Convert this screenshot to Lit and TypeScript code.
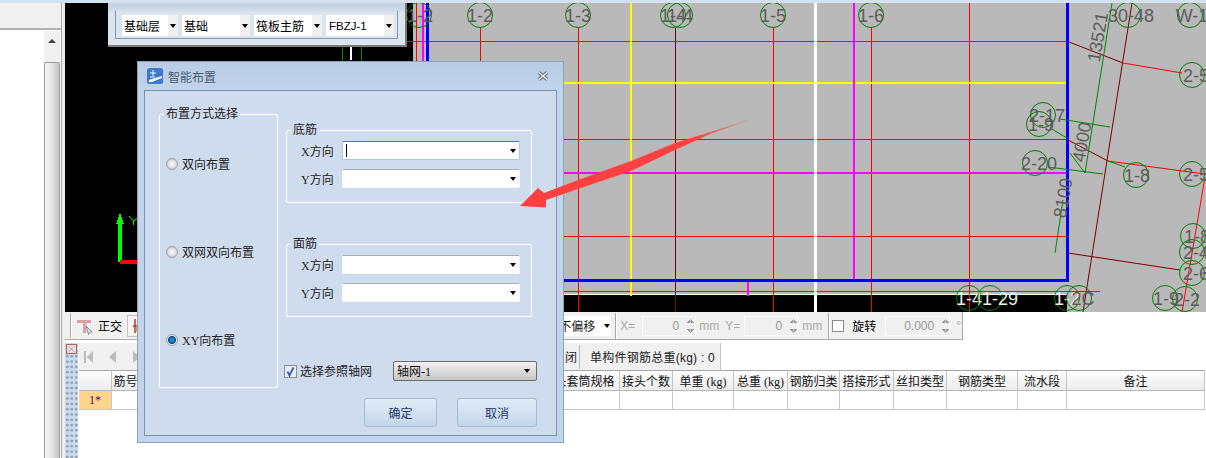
import { css, html, LitElement, svg } from 'lit';
import { customElement } from 'lit/decorators.js';

type Bubble = [number, number, string, number, boolean?];

// axis bubbles: circle x, circle y, label, label shift from the circle, label on black
const BUBBLES: Bubble[] = [
    [419, 15, '1-2', 1], [480, 15, '1-2', 0], [578, 15, '1-3', 0], [673, 15, '1-4', 0], [680, 15, '1-4', 0],
    [773, 15, '1-5', 0], [871, 15, '1-6', 0], [1128, 15, '30-48', 3], [1190, 15, 'W-1', 2],
    [1192, 75, '2-5', 4], [1043, 115, '2-17', 4], [1039, 124, '1-9', 2], [1035, 163, '2-20', 4],
    [1136, 175, '1-8', 1], [1192, 174, '2-5', 4], [1193, 236, '1-8', 4], [1192, 252, '2-4', 4],
    [1192, 273, '2-6', 4], [1165, 298, '1-9', 1], [1185, 299, '2-2', 2], [969, 298, '1-4', 0, true],
    [990, 298, '1-29', 10, true], [1067, 298, '1-2', 0, true], [1079, 298, '2C', 4],
];

const COLUMNS = ['', '筋号', '', '接头套筒规格', '接头个数', '单重 (kg)', '总重 (kg)', '钢筋归类', '搭接形式', '丝扣类型', '钢筋类型', '流水段', '备注'];

@customElement('app-root')
export class AppRoot extends LitElement
{
    private renderCanvas()
    {
        return html`
<svg class="cad" viewBox="65 3 1141 309" width="1141" height="309">
    <rect x="65" y="3" width="1141" height="309" fill="#000"></rect>
    <rect x="413" y="3" width="793" height="291" fill="#b9b9b9"></rect>
    <rect x="1067" y="294" width="139" height="18" fill="#b9b9b9"></rect>
    <g shape-rendering="crispEdges">
        <path d="M413 294.5H1067" stroke="#fff"></path>
        <path d="M407 41.5H1067M413 139.5H1067M413 236.5H1067M413 291.5H1100" stroke="#f00"></path>
        <path d="M416.5 3V312M480.5 28V312M578.5 28V312M773.5 28V312M871.5 28V312M969.5 3V312" stroke="#f00"></path>
        <path d="M675.5 28V312" stroke="#6e0000"></path>
        <path d="M631 3V296" stroke="#ff0" stroke-width="2"></path>
        <path d="M413 83H1067" stroke="#ff0" stroke-width="2"></path>
        <path d="M423 3V294M854 3V280M748 281V296" stroke="#f0f" stroke-width="2"></path>
        <path d="M413 173H1067" stroke="#f0f" stroke-width="2"></path>
        <path d="M815.5 3V312" stroke="#fff" stroke-width="3"></path>
        <path d="M427.5 3V282M1067.5 3V282M426 280.5H1069" stroke="#00f" stroke-width="3"></path>
        <path d="M342 46V62M361 46V62" stroke="#080"></path>
        <path d="M350.5 47V60" stroke="#fff" stroke-width="2"></path>
        <path d="M120 262V224" stroke="#0f0" stroke-width="4"></path>
        <path d="M120 213L124 224H116Z" fill="#0f0"></path>
        <path d="M120 262H138" stroke="#f00" stroke-width="4"></path>
    </g>
    <path d="M129 216L133.500 221L138 218M133.500 221V225" fill="none" stroke="#0f0"></path>
    <path d="M1069 42L1123 63M1132 3L1083 312M1068 140L1108 161M1068 253L1180 270" fill="none" stroke="#7a0000"></path>
    <path d="M1123 63L1182 73M1108 161L1205 174M1205 177L1182 312" fill="none" stroke="#f00"></path>
    <path d="M1112 3L1085 173M1060 119L1110 127M1048 167L1103 174M1063 200L1055 253M1050 128L1067 138M1108 161L1125 167M1070 153L1085 173" fill="none" stroke="#080"></path>
    ${BUBBLES.map(([x, y, label, shift, onBlack]) => svg`
        <circle cx=${x} cy=${y} r="12.500" class="ring"></circle>
        <text x=${x + shift} y=${y + 6.500} class=${onBlack ? 'tag light' : 'tag'}>${label}</text>`)}
    <text class="tag" transform="translate(1098 37) rotate(-80)" y="6">13521</text>
    <text class="tag" transform="translate(1082 142) rotate(-80)" y="6">4000</text>
    <text class="tag" transform="translate(1063 198) rotate(-80)" y="6">8100</text>
</svg>`;
    }

    private renderToolRow()
    {
        return html`
<div class="tool-row">
    <span class="grip"></span>
    <svg class="ortho" viewBox="0 0 18 18" width="18" height="18">
        <path d="M1 3H15V6H10V16H7V6H1Z" fill="#dca2a2"></path>
        <path d="M10 9L16 15L13.500 15.500L12.500 17.500Z" fill="#dfe6ee" stroke="#66788c" stroke-width=".8"></path>
    </svg>
    <span class="tool-label">正交</span>
    <span class="tool-btn">
        <svg viewBox="0 0 12 20" width="12" height="20">
            <path d="M2 10H10M4 3V17" stroke="#a03c3c" stroke-width="1.500"></path>
            <circle cx="8" cy="13" r="3.500" fill="#c9a24a"></circle>
        </svg>
    </span>
    <span class="fill"></span>
    <span class="offset"><span>不偏移</span><span class="offset-arrow"><i class="caret"></i></span></span>
    <span class="sep"></span>
    <span class="dim x-eq">X=</span>
    <span class="num w-54">0<i class="spin"></i></span>
    <span class="dim mm">mm</span>
    <span class="dim y-eq">Y=</span>
    <span class="num w-55">0<i class="spin"></i></span>
    <span class="dim mm">mm</span>
    <span class="sep sep-b"></span>
    <span class="box"></span>
    <span class="tool-label rotate">旋转</span>
    <span class="num w-66">0.000<i class="spin"></i></span>
    <span class="dim deg">°</span>
</div>`;
    }

    private renderSheet()
    {
        return html`
<div class="sheet">
    <div class="dock">
        <svg viewBox="0 0 12 10" width="12" height="10">
            <rect x=".5" y=".5" width="10" height="9" fill="#f0d8d8" stroke="#b06060"></rect>
            <path d="M2.500 2L8.500 8M8.500 2L2.500 8" stroke="#fff" stroke-width="2"></path>
            <path d="M2.500 2L8.500 8M8.500 2L2.500 8" stroke="#666" stroke-width=".7"></path>
        </svg>
    </div>
    <div class="sheet-main">
        <div class="nav-row">
            <svg class="nav" viewBox="0 0 60 14" width="60" height="14">
                <path d="M1 1H3V13H1ZM10 1V13L4 7Z" fill="#bcbcbc"></path>
                <path d="M33 1V13L26 7Z" fill="#bcbcbc"></path>
                <path d="M50 1V13L57 7Z" fill="#bcbcbc"></path>
            </svg>
            <span class="fill"></span>
            <span class="nav-cut">闭</span>
            <span class="nav-sep"></span>
            <span class="total">单构件钢筋总重(kg) : 0</span>
        </div>
        <div class="table">
            ${COLUMNS.map((c) => html`<div class="th">${c}</div>`)}
            ${COLUMNS.map((_, i) => html`<div class=${i === 0 ? 'td row-no' : 'td'}>${i === 0 ? '1*' : ''}</div>`)}
        </div>
    </div>
</div>`;
    }

    private renderDialog()
    {
        const direction = (label: string, focused = false) => html`
<div class="field">
    <span class="field-label">${label}</span>
    <span class=${focused ? 'combo focus' : 'combo'}>${focused ? html`<i class="cursor"></i>` : ''}<i class="caret"></i></span>
</div>`;
        const radio = (label: string, on = false) => html`
<div class="radio-row"><i class=${on ? 'radio on' : 'radio'}></i>${label}</div>`;

        return html`
<div class="dialog">
    <div class="title">
        <svg viewBox="0 0 16 16" width="16" height="16">
            <rect width="16" height="16" rx="2.500" fill="#3f78d0"></rect>
            <path d="M2 12L15 8V10L5 14H2Z" fill="#fff"></path>
            <path d="M6 2V8M3 5H9M3 9H8" stroke="#fff" fill="none"></path>
        </svg>
        <span>智能布置</span>
        <svg class="close" viewBox="0 0 12 10" width="12" height="10">
            <path d="M2 1.500L10 8.500M10 1.500L2 8.500" stroke="#4a5a6a" stroke-width="3.200"></path>
            <path d="M2 1.500L10 8.500M10 1.500L2 8.500" stroke="#fff" stroke-width="1.400"></path>
        </svg>
    </div>
    <div class="panel">
        <div class="columns">
            <fieldset class="modes">
                <legend>布置方式选择</legend>
                ${radio('双向布置')}
                ${radio('双网双向布置')}
                ${radio('XY向布置', true)}
            </fieldset>
            <div class="right">
                <fieldset class="rebar">
                    <legend>底筋</legend>
                    ${direction('X方向', true)}
                    ${direction('Y方向')}
                </fieldset>
                <fieldset class="rebar second">
                    <legend>面筋</legend>
                    ${direction('X方向')}
                    ${direction('Y方向')}
                </fieldset>
                <div class="ref-row">
                    <svg class="check" viewBox="0 0 13 13" width="13" height="13">
                        <rect x=".5" y=".5" width="12" height="12" fill="#e6ecf4" stroke="#8a8f98"></rect>
                        <path d="M3.500 6.500L5.500 10.500L9.500 2.500" fill="none" stroke="#3a5fb8" stroke-width="1.800"></path>
                    </svg>
                    <span>选择参照轴网</span>
                    <span class="grid-select">轴网-1<i class="caret"></i></span>
                </div>
            </div>
        </div>
        <div class="actions">
            <span class="btn ok">确定</span>
            <span class="btn cancel">取消</span>
        </div>
    </div>
</div>`;
    }

    protected render(): unknown
    {
        return html`
<div class="strip"></div>
<aside class="side">
    <div class="side-head"></div>
    <div class="side-body">
        <div class="scroll">
            <div class="scroll-up"><i class="up"></i></div>
            <div class="scroll-thumb"></div>
        </div>
    </div>
</aside>
<main class="main">
    ${this.renderCanvas()}
    ${this.renderToolRow()}
    ${this.renderSheet()}
</main>
<div class="float-bar">
    <div class="float-inner">
        <span class="pick w-56">基础层<i class="pick-arrow"><i class="caret"></i></i></span>
        <span class="pick w-68">基础<i class="pick-arrow"><i class="caret"></i></i></span>
        <span class="pick w-68">筏板主筋<i class="pick-arrow"><i class="caret"></i></i></span>
        <span class="pick w-68 latin">FBZJ-1<i class="pick-arrow"><i class="caret"></i></i></span>
    </div>
</div>
${this.renderDialog()}
<svg class="arrow" viewBox="0 0 250 100" width="250" height="100">
    <defs>
        <linearGradient id="fade" x1="1" y1="0" x2="0" y2="1">
            <stop offset="0" stop-color="#ff4040" stop-opacity=".1"></stop>
            <stop offset=".25" stop-color="#ff4040"></stop>
        </linearGradient>
    </defs>
    <path d="M240 3L157 29L113 47L60 66L26 79L20 74L2 92L28 93.500L28 86L60 75L113 57L157 36L192 20Z" fill="url(#fade)"></path>
</svg>`;
    }

    static get styles()
    {
        return css`
:host {
    display: grid;
    grid-template-columns: 65px 1fr;
    grid-template-rows: 3px 455px;
    position: relative;
    width: 1206px;
    height: 458px;
    overflow: hidden;
    background: #fff;
    font: 12px "Liberation Serif", "Noto Sans CJK SC", serif;
    color: #111;
}

i {
    display: block;
    font-style: normal;
}

.strip {
    grid-column: 1 / 3;
    background: #d5e1ee;
}

.side {
    display: flex;
    flex-direction: column;
    border-right: 3px solid #eee;
    box-sizing: border-box;
}

.side-head {
    height: 25px;
    background: #f0f0f0;
    border-right: 1px solid #a8a8a8;
    border-bottom: 2px solid #b0b0b0;
}

.side-body {
    flex: 1;
    display: flex;
    justify-content: flex-end;
    border-right: 1px solid #a8a8a8;
    padding-top: 1px;
}

.scroll {
    width: 16px;
    margin-right: 1px;
    display: flex;
    flex-direction: column;
}

.scroll-up {
    height: 31px;
    background: #f0f0f0;
    display: flex;
    justify-content: center;
    padding-top: 8px;
    box-sizing: border-box;
}

.up {
    width: 0;
    height: 0;
    border: 4px solid transparent;
    border-top: 0;
    border-bottom: 4px solid #444;
}

.scroll-thumb {
    flex: 1;
    border: 1px solid #9a9a9a;
    border-bottom: 0;
    border-radius: 2px 2px 0 0;
    background: linear-gradient(90deg, #f6f6f6, #e6e6e6 45%, #c4c4c4);
}

.main {
    display: flex;
    flex-direction: column;
    min-width: 0;
}

.cad {
    display: block;
    flex: none;
}

.ring {
    fill: none;
    stroke: #008000;
}

.tag {
    font: 18px "Liberation Sans", sans-serif;
    fill: #5c5c5c;
    text-anchor: middle;
}

.tag.light {
    fill: #eee;
}

.fill {
    flex: 1;
}

.tool-row {
    width: 898px;
    height: 28px;
    flex: none;
    box-sizing: border-box;
    display: flex;
    align-items: center;
    background: #f0f0f0;
    border-right: 1px solid #a8a8a8;
    border-bottom: 1px solid #a8a8a8;
    font-family: "Liberation Sans", "Noto Sans CJK SC", sans-serif;
}

.grip {
    width: 1px;
    height: 25px;
    margin-left: 5px;
    background: #a8a8a8;
    border-right: 1px solid #fff;
}

.ortho {
    margin-left: 4px;
}

.tool-label {
    margin-left: 4px;
    color: #000;
}

.tool-btn {
    margin-left: 5px;
    width: 20px;
    height: 22px;
    box-sizing: border-box;
    display: flex;
    align-items: center;
    padding-left: 3px;
    background: #f8f4f2;
    border: 1px solid #c4c4c4;
}

.offset {
    width: 52px;
    height: 20px;
    display: flex;
    align-items: center;
    background: #fff;
    justify-content: space-between;
    color: #222;
}

.offset-arrow {
    width: 8px;
    display: flex;
    justify-content: center;
}

.sep {
    width: 1px;
    height: 26px;
    margin-left: 4px;
    background: #a8a8a8;
    border-right: 1px solid #fff;
}

.sep-b {
    margin-left: 6px;
}

.dim {
    color: #a9a9a9;
}

.x-eq {
    margin-left: 3px;
    width: 22px;
}

.y-eq {
    margin-left: 6px;
    width: 19px;
}

.mm {
    margin-left: 3px;
}

.deg {
    margin-left: 5px;
    margin-right: 1px;
}

.num {
    height: 20px;
    box-sizing: border-box;
    display: flex;
    align-items: center;
    justify-content: flex-end;
    gap: 8px;
    padding-right: 1px;
    border: 1px solid #fafafa;
    color: #9a9a9a;
}

.w-54 {
    width: 54px;
}

.w-55 {
    width: 55px;
}

.w-66 {
    width: 66px;
}

.spin {
    width: 7px;
    height: 14px;
    background:
        linear-gradient(135deg, transparent 50%, #999 50%) 0 0 / 3.500px 4px no-repeat,
        linear-gradient(225deg, transparent 50%, #999 50%) 3.500px 0 / 3.500px 4px no-repeat,
        linear-gradient(45deg, transparent 50%, #999 50%) 0 10px / 3.500px 4px no-repeat,
        linear-gradient(315deg, transparent 50%, #999 50%) 3.500px 10px / 3.500px 4px no-repeat;
}

.box {
    width: 12px;
    height: 12px;
    margin-left: 2px;
    background: #fff;
    border: 1px solid #8a8a8a;
    box-sizing: border-box;
}

.rotate {
    margin-left: 8px;
    margin-right: 9px;
}

.sheet {
    flex: 1;
    display: flex;
    margin-top: 3px;
    min-height: 0;
}

.dock {
    width: 13px;
    flex: none;
    padding-top: 1px;
    box-sizing: border-box;
    background-color: #c9d9ee;
    background-image: radial-gradient(#8f9cad 1px, transparent 1.200px);
    background-size: 4.500px 5.300px;
}

.dock svg {
    display: block;
    margin-left: 1px;
}

.sheet-main {
    flex: 1;
    min-width: 0;
    margin-left: 1px;
}

.nav-row {
    width: 642px;
    height: 27px;
    box-sizing: border-box;
    display: flex;
    align-items: center;
    background: #f0f0f0;
    border-right: 1px solid #c4c4c4;
    font-family: "Liberation Sans", "Noto Sans CJK SC", sans-serif;
}

.nav {
    margin-left: 4px;
}

.nav-cut {
    width: 14px;
    color: #222;
}

.nav-sep {
    width: 1px;
    height: 24px;
    background: #bdbdbd;
    margin-right: 10px;
}

.total {
    margin-right: 5px;
    color: #1a1a1a;
    letter-spacing: .25px;
}

.table {
    width: 1126px;
    display: grid;
    grid-template-columns: 33px 28px 398px 82px 53px 61px 54px 52px 54px 53px 71px 49px 138px;
    grid-template-rows: 20px 19px;
    border-top: 1px solid #a8a8a8;
    border-right: 1px solid #c4c4c4;
    box-sizing: border-box;
}

.th {
    box-sizing: border-box;
    display: flex;
    align-items: center;
    justify-content: center;
    white-space: nowrap;
    background: linear-gradient(#fdfdfd, #ececec);
    border-right: 1px solid #c4c4c4;
    border-bottom: 1px solid #b8b8b8;
    color: #111;
}

.td {
    box-sizing: border-box;
    display: flex;
    align-items: center;
    justify-content: center;
    border-right: 1px solid #c8c8c8;
    border-bottom: 1px solid #c4c4c4;
}

.row-no {
    background: #ffd58c;
    color: #4a0a6a;
}

.float-bar {
    position: absolute;
    left: 108px;
    top: 3px;
    width: 299px;
    height: 44px;
    box-sizing: border-box;
    padding: 7px 7px 6px 7px;
    background: linear-gradient(#c6d3e2 0, #c6d3e2 4px, #dbe5f0 10px);
    border-right: 2px solid #7a7a7a;
    border-bottom: 2px solid #7a7a7a;
    font-family: "Liberation Sans", "Noto Sans CJK SC", sans-serif;
}

.float-inner {
    display: flex;
    gap: 4px;
    height: 29px;
    box-sizing: border-box;
    padding: 4px 0 0 6px;
    border: 1px solid #7f9ab8;
    border-top-color: transparent;
}

.pick {
    height: 21px;
    box-sizing: border-box;
    display: flex;
    align-items: center;
    justify-content: space-between;
    padding-left: 2px;
    background: #fff;
    color: #000;
}

.pick.latin {
    padding-left: 3px;
    font-size: 11.500px;
}

.w-56 {
    width: 56px;
}

.w-68 {
    width: 68px;
}

.pick-arrow {
    width: 10px;
    height: 21px;
    display: flex;
    align-items: center;
    justify-content: center;
    background: #f0f0f0;
}

.caret {
    width: 0;
    height: 0;
    border: 3.500px solid transparent;
    border-bottom: 0;
    border-top: 4px solid #000;
}

.dialog {
    position: absolute;
    left: 137px;
    top: 61px;
    width: 427px;
    height: 382px;
    box-sizing: border-box;
    display: flex;
    flex-direction: column;
    padding: 0 6px 6px;
    background: linear-gradient(#b8cce6, #c3d4ea 30px);
    border: 1px solid #8ea3bb;
}

.title {
    height: 28px;
    flex: none;
    display: flex;
    align-items: center;
    gap: 5px;
    padding-left: 3px;
    color: #4a5a70;
    font-family: "Noto Sans CJK SC", sans-serif;
}

.close {
    margin-left: auto;
    margin-right: 8px;
}

.panel {
    flex: 1;
    box-sizing: border-box;
    padding: 16px 19px 0 14px;
    background: #cfdcee;
    border: 1px solid #7595b5;
}

.columns {
    display: flex;
    gap: 8px;
    align-items: flex-start;
}

fieldset {
    margin: 0;
    box-sizing: border-box;
    border: 1px solid #fff;
    border-radius: 2px;
    min-width: 0;
}

legend {
    padding: 0 2px;
    line-height: 14px;
    color: #222;
}

.modes {
    width: 119px;
    height: 281px;
    padding: 35px 0 0;
    display: flex;
    flex-direction: column;
}

.modes legend {
    margin-left: 4px;
}

.radio-row {
    display: flex;
    align-items: center;
    gap: 4px;
    height: 16px;
    margin: 0 0 72px 6px;
    color: #222;
}

.radio {
    width: 12px;
    height: 12px;
    box-sizing: border-box;
    border-radius: 50%;
    border: 1px solid #9aa0a8;
    background: radial-gradient(#f2f2f2 25%, #cfcfcf 70%, #eee);
}

.radio.on {
    background: radial-gradient(#0a8ad0 30%, #14406c 50%, #e6e6e6 62%);
}

.right {
    width: 251px;
    padding-top: 16px;
}

.rebar {
    width: 246px;
    height: 80px;
    padding: 4px 0 0;
}

.rebar legend {
    margin-left: 4px;
}

.second {
    margin-top: 34px;
}

.field {
    display: flex;
    align-items: center;
    margin: 0 11px 9px 14px;
}

.field-label {
    width: 41px;
    color: #222;
}

.combo {
    flex: 1;
    height: 19px;
    box-sizing: border-box;
    display: flex;
    align-items: center;
    padding: 0 3px;
    background: #fff;
    border: 1px solid #f4f6fa;
    border-top-color: #a8adb6;
    border-radius: 2px;
}

.combo .caret {
    margin-left: auto;
}

.combo.focus {
    border-color: #a4cbe8;
    border-top-color: #4a7cae;
}

.cursor {
    width: 1px;
    height: 13px;
    background: #000;
}

.ref-row {
    display: flex;
    align-items: center;
    gap: 3px;
    height: 20px;
    margin: 44px 0 0 -2px;
    color: #222;
}

.check {
    flex: none;
}

.grid-select {
    margin-left: auto;
    width: 144px;
    height: 20px;
    box-sizing: border-box;
    display: flex;
    align-items: center;
    justify-content: space-between;
    padding: 0 6px 0 3px;
    background: linear-gradient(#f2f2f2, #c6c6c6);
    border: 1px solid #6a6a6a;
    border-radius: 2px;
    color: #111;
}

.actions {
    display: flex;
    justify-content: flex-end;
    gap: 20px;
    margin-top: 10px;
}

.btn {
    height: 29px;
    box-sizing: border-box;
    display: flex;
    align-items: center;
    justify-content: center;
    background: linear-gradient(#e0ebf7, #c5d6ea);
    border: 1px solid #a6bcd6;
    border-radius: 3px;
    color: #1f3a63;
}

.ok {
    width: 73px;
}

.cancel {
    width: 80px;
}

.arrow {
    position: absolute;
    left: 518px;
    top: 114px;
}
        `;
    }
}
